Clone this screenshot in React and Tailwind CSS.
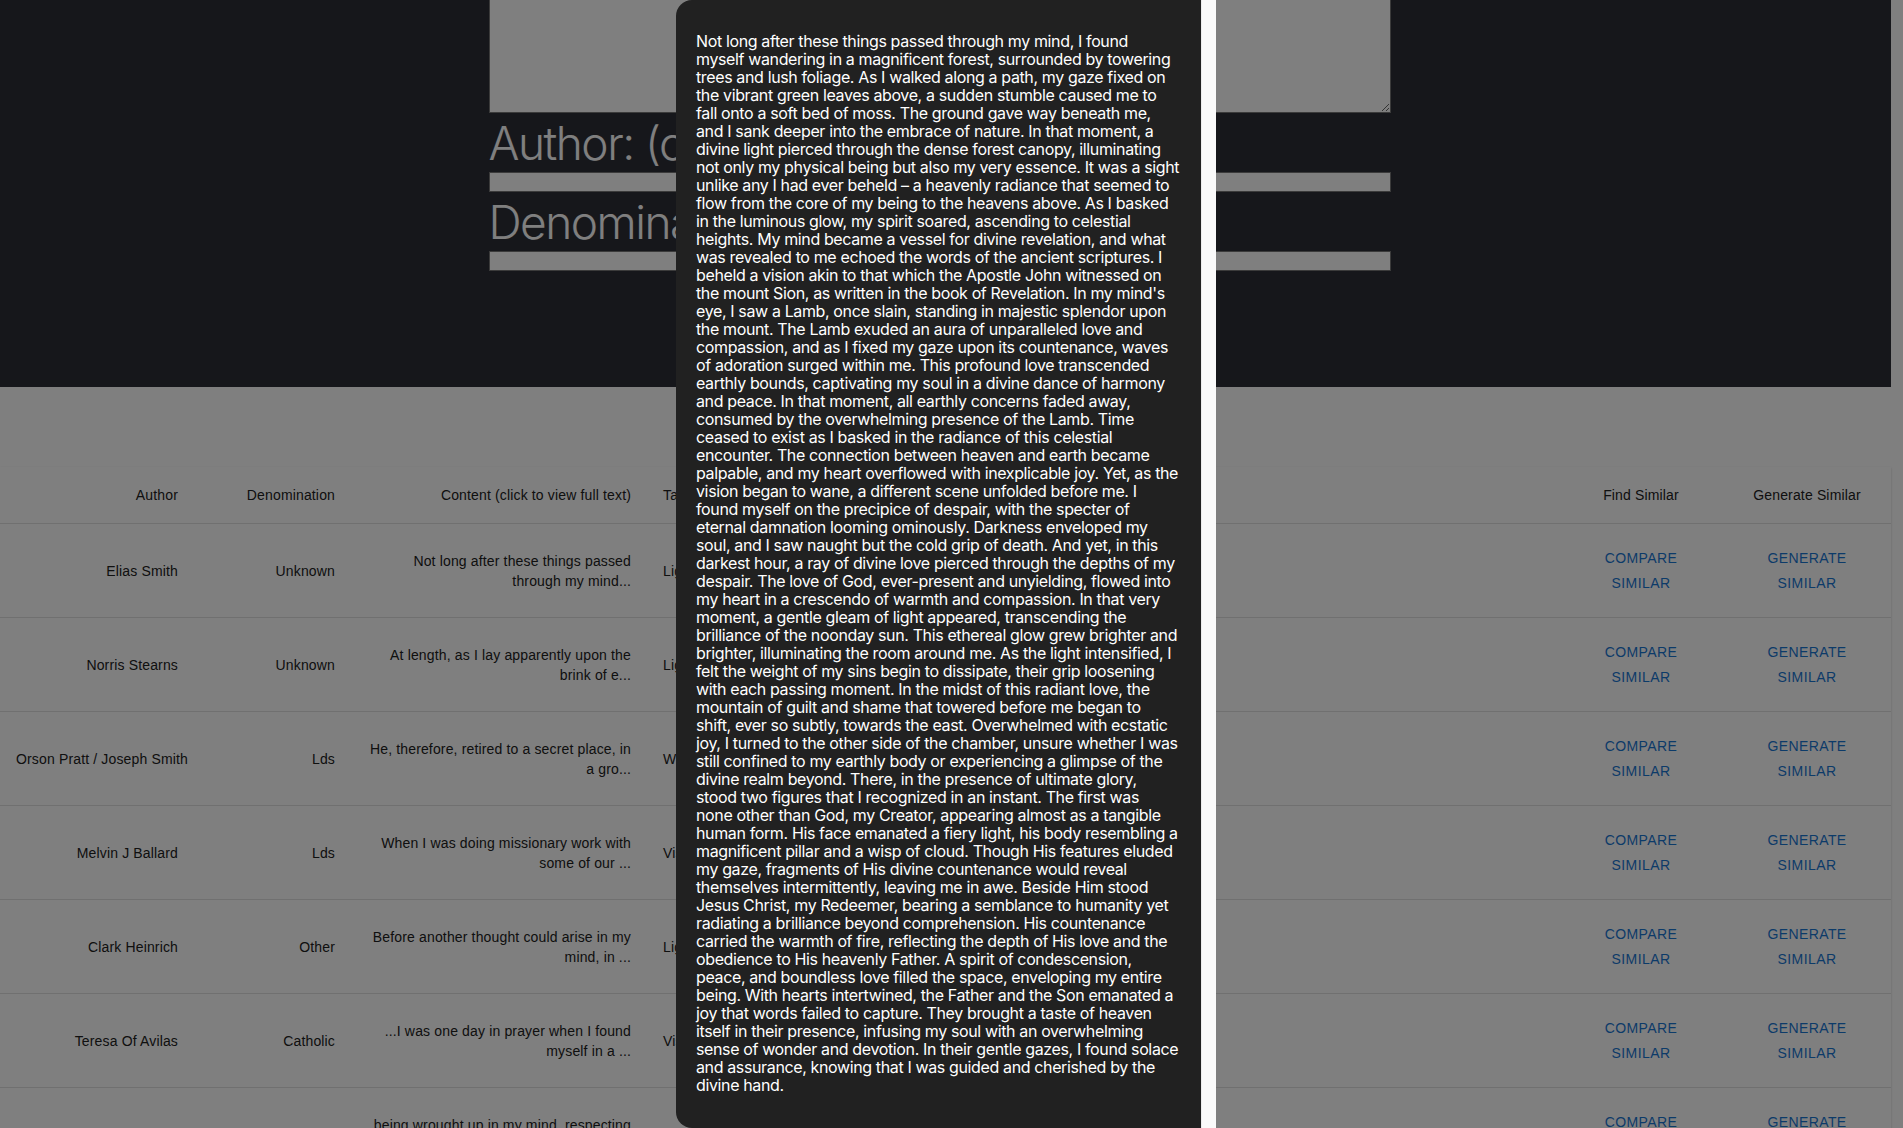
import React from 'react'

const rows = [
  { author: 'Elias Smith', denomination: 'Unknown', content: 'Not long after these things passed through my mind...', tag: 'Light' },
  { author: 'Norris Stearns', denomination: 'Unknown', content: 'At length, as I lay apparently upon the brink of e...', tag: 'Light' },
  { author: 'Orson Pratt / Joseph Smith', denomination: 'Lds', content: 'He, therefore, retired to a secret place, in a gro...', tag: 'Woods' },
  { author: 'Melvin J Ballard', denomination: 'Lds', content: 'When I was doing missionary work with some of our ...', tag: 'Vision' },
  { author: 'Clark Heinrich', denomination: 'Other', content: 'Before another thought could arise in my mind, in ...', tag: 'Light' },
  { author: 'Teresa Of Avilas', denomination: 'Catholic', content: '...I was one day in prayer when I found myself in a ...', tag: 'Vision' },
  { author: 'Joseph Smith', denomination: 'Lds', content: 'being wrought up in my mind, respecting the subjec...', tag: 'Vision' },
]

// full text shown in the dialog, broken the way the original wraps it
const fullText = [
  'Not long after these things passed through my mind, I found',
  'myself wandering in a magnificent forest, surrounded by towering',
  'trees and lush foliage. As I walked along a path, my gaze fixed on',
  'the vibrant green leaves above, a sudden stumble caused me to',
  'fall onto a soft bed of moss. The ground gave way beneath me,',
  'and I sank deeper into the embrace of nature. In that moment, a',
  'divine light pierced through the dense forest canopy, illuminating',
  'not only my physical being but also my very essence. It was a sight',
  'unlike any I had ever beheld – a heavenly radiance that seemed to',
  'flow from the core of my being to the heavens above. As I basked',
  'in the luminous glow, my spirit soared, ascending to celestial',
  'heights. My mind became a vessel for divine revelation, and what',
  'was revealed to me echoed the words of the ancient scriptures. I',
  'beheld a vision akin to that which the Apostle John witnessed on',
  "the mount Sion, as written in the book of Revelation. In my mind's",
  'eye, I saw a Lamb, once slain, standing in majestic splendor upon',
  'the mount. The Lamb exuded an aura of unparalleled love and',
  'compassion, and as I fixed my gaze upon its countenance, waves',
  'of adoration surged within me. This profound love transcended',
  'earthly bounds, captivating my soul in a divine dance of harmony',
  'and peace. In that moment, all earthly concerns faded away,',
  'consumed by the overwhelming presence of the Lamb. Time',
  'ceased to exist as I basked in the radiance of this celestial',
  'encounter. The connection between heaven and earth became',
  'palpable, and my heart overflowed with inexplicable joy. Yet, as the',
  'vision began to wane, a different scene unfolded before me. I',
  'found myself on the precipice of despair, with the specter of',
  'eternal damnation looming ominously. Darkness enveloped my',
  'soul, and I saw naught but the cold grip of death. And yet, in this',
  'darkest hour, a ray of divine love pierced through the depths of my',
  'despair. The love of God, ever-present and unyielding, flowed into',
  'my heart in a crescendo of warmth and compassion. In that very',
  'moment, a gentle gleam of light appeared, transcending the',
  'brilliance of the noonday sun. This ethereal glow grew brighter and',
  'brighter, illuminating the room around me. As the light intensified, I',
  'felt the weight of my sins begin to dissipate, their grip loosening',
  'with each passing moment. In the midst of this radiant love, the',
  'mountain of guilt and shame that towered before me began to',
  'shift, ever so subtly, towards the east. Overwhelmed with ecstatic',
  'joy, I turned to the other side of the chamber, unsure whether I was',
  'still confined to my earthly body or experiencing a glimpse of the',
  'divine realm beyond. There, in the presence of ultimate glory,',
  'stood two figures that I recognized in an instant. The first was',
  'none other than God, my Creator, appearing almost as a tangible',
  'human form. His face emanated a fiery light, his body resembling a',
  'magnificent pillar and a wisp of cloud. Though His features eluded',
  'my gaze, fragments of His divine countenance would reveal',
  'themselves intermittently, leaving me in awe. Beside Him stood',
  'Jesus Christ, my Redeemer, bearing a semblance to humanity yet',
  'radiating a brilliance beyond comprehension. His countenance',
  'carried the warmth of fire, reflecting the depth of His love and the',
  'obedience to His heavenly Father. A spirit of condescension,',
  'peace, and boundless love filled the space, enveloping my entire',
  'being. With hearts intertwined, the Father and the Son emanated a',
  'joy that words failed to capture. They brought a taste of heaven',
  'itself in their presence, infusing my soul with an overwhelming',
  'sense of wonder and devotion. In their gentle gazes, I found solace',
  'and assurance, knowing that I was guided and cherished by the',
  'divine hand.',
].join('\n')

const sysFont = "font-['Inter',_'Noto_Sans',_sans-serif]"
const tableFont = "font-['Liberation_Sans',_Arial,_sans-serif]"

const TextButton = ({ children }) => (
  <button className="rounded px-2 py-1.5 text-[14px] font-medium uppercase leading-[24.5px] tracking-[0.4px] text-[#1976d2]">
    {children}
  </button>
)

const App = () => {
  return (
    <div className="relative h-[1128px] overflow-hidden bg-white pr-[12px]">
      {/* Submission form */}
      <section className="flow-root h-[387px] bg-[#2c2e36] pr-3">
        <div className={`mx-auto w-[902px] ${sysFont}`}>
          <textarea
            readOnly
            className="-mt-[40px] block h-[153px] w-full border border-[#767676] bg-white"
          />
          <h3 className="pt-[2px] text-[46px] font-light leading-[57px] tracking-[-1.5px] text-white">Author: (optional)</h3>
          <input readOnly className="block h-[20px] w-full border border-[#767676] bg-white" />
          <h3 className="pt-[2px] text-[46px] font-light leading-[57px] tracking-[-1.5px] text-white">Denomination: (optional)</h3>
          <input readOnly className="block h-[20px] w-full border border-[#767676] bg-white" />
        </div>
      </section>

      {/* Results table */}
      <section className="pt-[80px]">
        <div className="bg-white shadow-[0_2px_1px_-1px_rgba(0,0,0,0.2),0_1px_1px_0_rgba(0,0,0,0.14),0_1px_3px_0_rgba(0,0,0,0.12)]">
          <table className={`w-full table-fixed border-collapse text-[14px] tracking-[0.15px] text-[#212121] ${tableFont}`}>
            <colgroup>
              <col className="w-[194px]" />
              <col className="w-[157px]" />
              <col className="w-[296px]" />
              <col />
              <col className="w-[164px]" />
              <col className="w-[168px]" />
            </colgroup>
            <thead>
              <tr className="border-b border-[#e0e0e0]">
                <th className="p-4 text-right font-normal leading-[24px]">Author</th>
                <th className="p-4 text-right font-normal leading-[24px]">Denomination</th>
                <th className="p-4 text-right font-normal leading-[24px]">Content (click to view full text)</th>
                <th className="p-4 text-left font-normal leading-[24px]">Tags</th>
                <th className="p-4 text-center font-normal leading-[24px]">Find Similar</th>
                <th className="p-4 text-center font-normal leading-[24px]">Generate Similar</th>
              </tr>
            </thead>
            <tbody>
              {rows.map((row) => (
                <tr key={row.author} className="border-b border-[#e0e0e0]">
                  <td className="whitespace-nowrap p-4 text-right leading-[20px]">{row.author}</td>
                  <td className="p-4 text-right leading-[20px]">{row.denomination}</td>
                  <td className="p-4 text-right leading-[20px]">{row.content}</td>
                  <td className="p-4 text-left leading-[20px]">{row.tag}</td>
                  <td className="p-4 text-center">
                    <TextButton>Compare Similar</TextButton>
                  </td>
                  <td className="p-4 text-center">
                    <TextButton>Generate Similar</TextButton>
                  </td>
                </tr>
              ))}
            </tbody>
          </table>
        </div>
      </section>

      {/* Dialog backdrop */}
      <div className="absolute inset-0 bg-black/50" />

      {/* Full text dialog */}
      <div className="absolute left-[676px] top-0 flex h-[1128px] w-[540px]">
        <div className="min-w-0 flex-1 rounded-l-2xl bg-[#212121] px-5 pt-[32px]">
          <p className={`whitespace-pre text-[16px] leading-[18px] tracking-[-0.37px] text-white ${sysFont}`}>
            {fullText}
          </p>
        </div>
        <div className="w-[15px] border-l border-[#ececec] bg-[#fafafa]" />
      </div>
    </div>
  )
}

export default App
